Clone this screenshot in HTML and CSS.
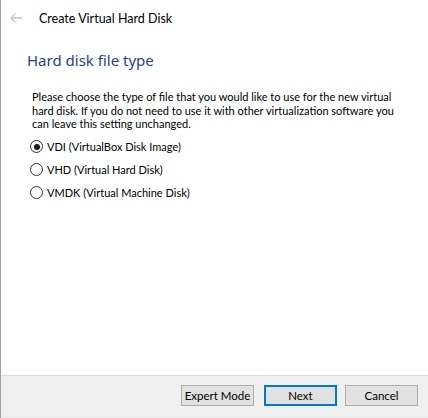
FILE: index.html
```html
<!DOCTYPE html>
<html>
<head>
<meta charset="utf-8">
<link rel="stylesheet" href="styles.css">
</head>
<body>
<div class="window">
  <div class="main">
    <div class="header">
      <svg class="back" width="12" height="10" viewBox="0 0 12 10"><path d="M5.5 0.5 L1 5 L5.5 9.5 M1 5 H12" fill="none" stroke="#c8c8c8" stroke-width="1.3"/></svg>
      <span class="title">Create Virtual Hard Disk</span>
    </div>
    <div class="content">
      <h1 class="heading">Hard disk file type</h1>
      <p class="desc">Please choose the type of file that you would like to use for the new virtual hard disk. If you do not need to use it with other virtualization software you can leave this setting unchanged.</p>
      <div class="options">
        <label class="option"><span class="radio checked"></span>VDI (VirtualBox Disk Image)</label>
        <label class="option"><span class="radio"></span>VHD (Virtual Hard Disk)</label>
        <label class="option"><span class="radio"></span>VMDK (Virtual Machine Disk)</label>
      </div>
    </div>
  </div>
  <div class="footer">
    <button class="btn">Expert Mode</button>
    <button class="btn primary">Next</button>
    <button class="btn">Cancel</button>
  </div>
</div>
</body>
</html>
```
FILE: styles.css
```css
html, body { margin: 0; padding: 0; }
body { width: 428px; height: 418px; background: #ffffff; font-family: "Lato", "Noto Sans", sans-serif; color: #000; overflow: hidden; }
.window { display: flex; flex-direction: column; height: 418px; border-left: 1px solid #a0a0a0; box-sizing: border-box; }
.main { flex: 1; background: #fff; }
.header { display: flex; align-items: center; height: 36px; padding-left: 9px; }
.back { margin-right: 17px; }
.title { font-size: 12.5px; }
.content { padding-left: 26px; padding-right: 10px; }
.heading { margin: 14px 0 0 0; font-family: "Noto Sans", sans-serif; font-size: 15px; font-weight: normal; color: #1f3f95; }
.desc { margin: 20px 0 0 5px; font-size: 11px; line-height: 13.5px; width: 380px; }
.options { margin-top: 9px; margin-left: 3px; display: flex; flex-direction: column; gap: 9px; }
.option { display: flex; align-items: center; font-size: 11px; height: 14px; }
.radio { width: 13px; height: 13px; border: 1px solid #333; border-radius: 50%; margin-right: 4px; box-sizing: border-box; position: relative; background: #fff; }
.radio.checked::after { content: ""; position: absolute; left: 2.5px; top: 2.5px; width: 6px; height: 6px; border-radius: 50%; background: #1a1a1a; }
.footer { height: 43px; background: #f0f0f0; border-top: 1px solid #dcdcdc; border-bottom: 1px solid #e6e6e6; display: flex; justify-content: flex-end; align-items: center; gap: 8px; padding-right: 10px; padding-bottom: 2px; box-sizing: border-box; }
.btn { width: 73px; height: 21px; background: #e1e1e1; border: 1px solid #adadad; font-family: inherit; font-size: 11.5px; padding: 0; color: #000; }
.btn.primary { border: 2px solid #0078d7; }
.btn:first-child { margin-right: 2px; }
```
